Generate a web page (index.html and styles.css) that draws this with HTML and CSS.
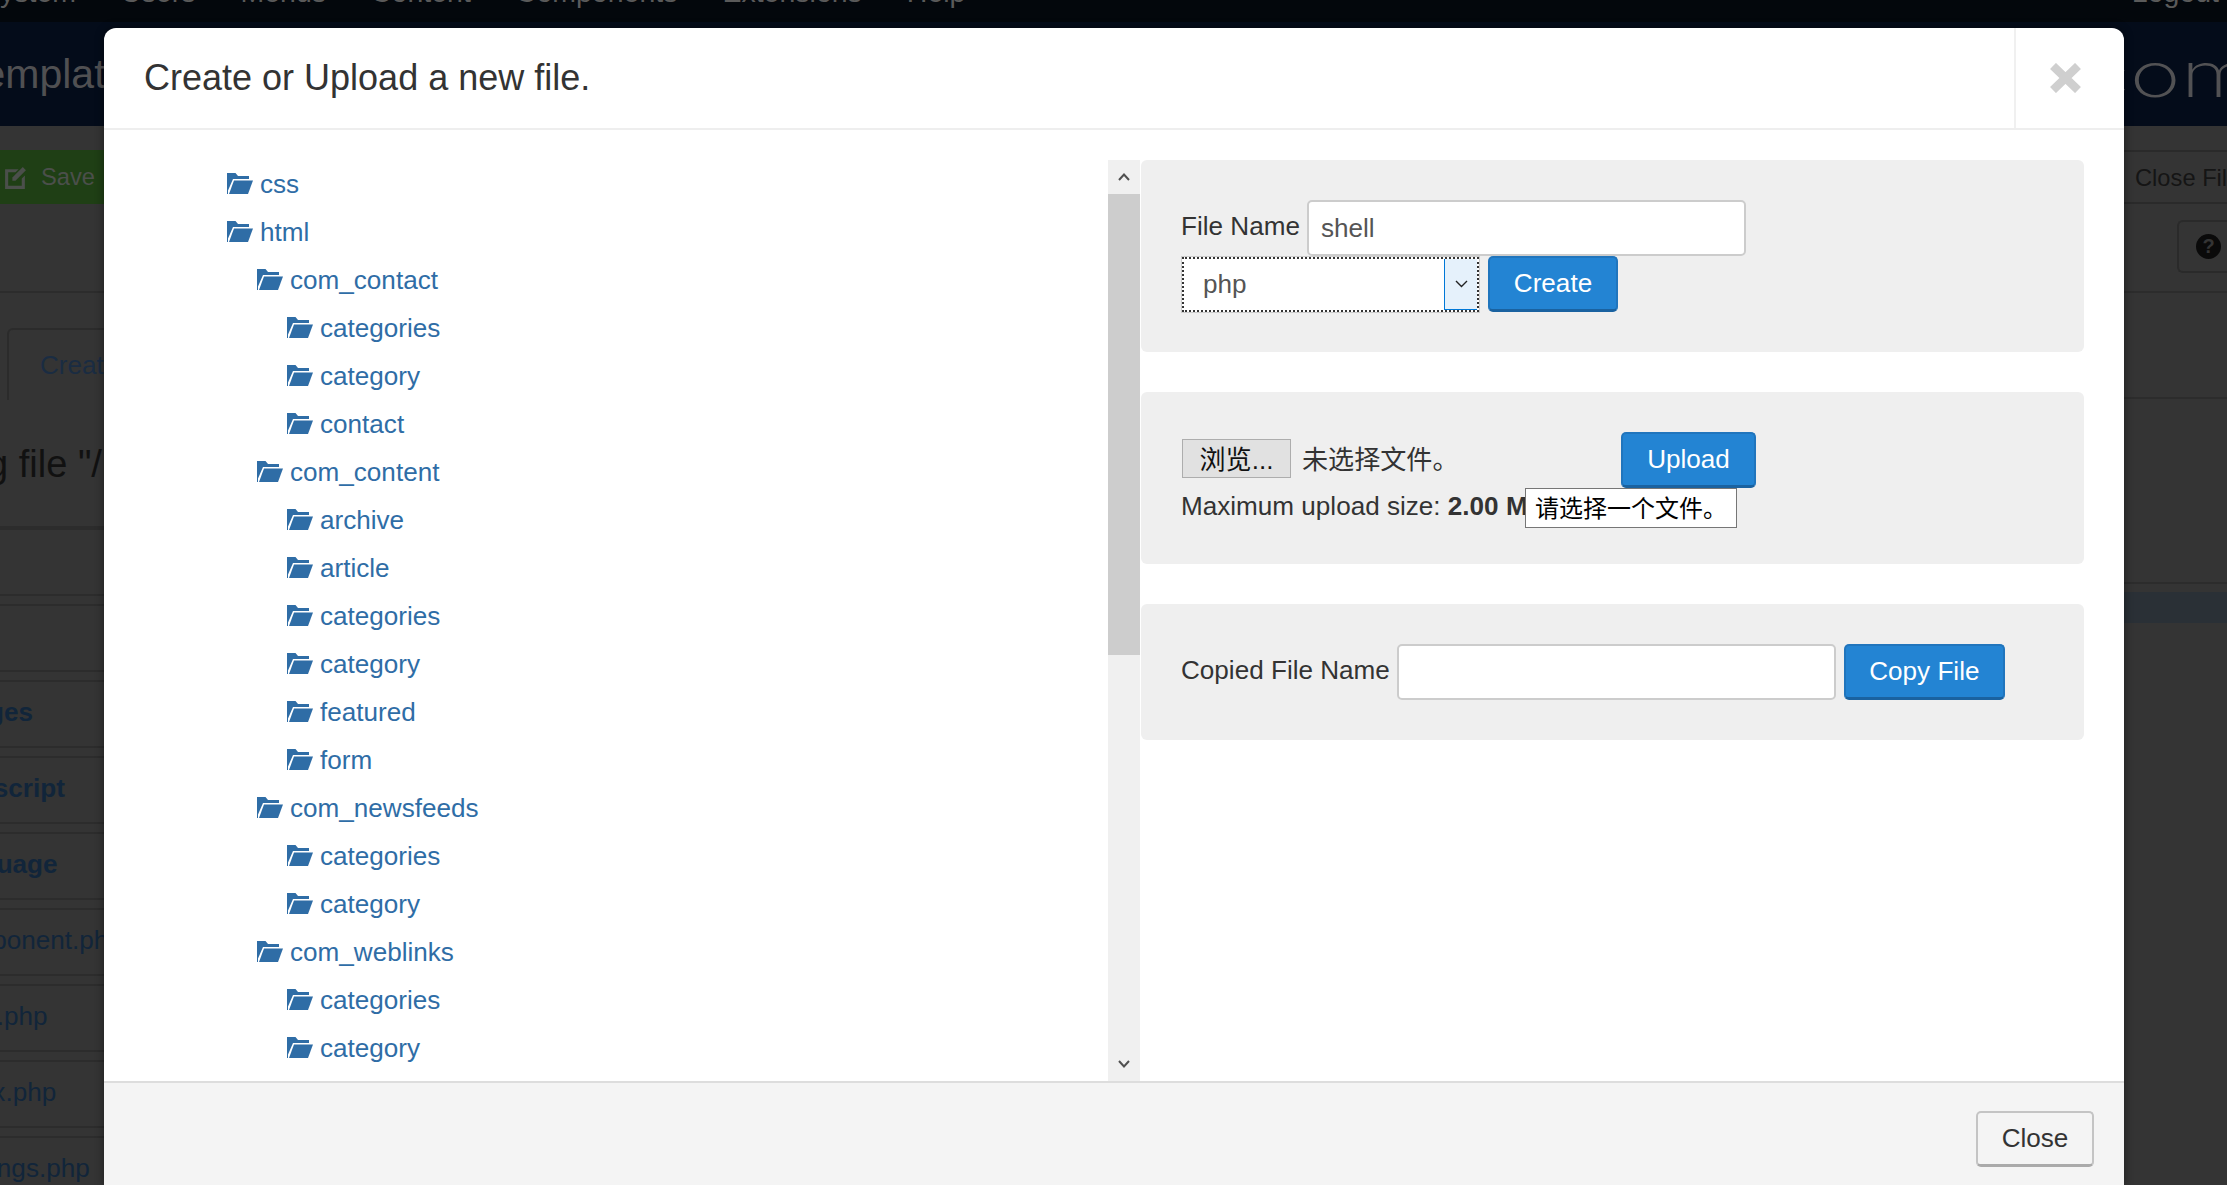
FILE: index.html
```html
<!DOCTYPE html>
<html lang="en">
<head>
    <meta charset="UTF-8">
    <title>Template Customise</title>
    <link rel="stylesheet" href="styles.css">
</head>
<body>
    <svg class="defs" width="0" height="0">
        <symbol id="folder" viewBox="0 0 26 21">
            <path d="M0 21V0h8.5L11 3h11v3H6L1 17.5V21z"/>
            <path d="M7 7.5h19L21 21H2z"/>
        </symbol>
    </svg>

    <!-- page behind the dialog -->
    <div class="page">
        <div class="nav">
            <div class="navInner">
                <span class="navFirst">System</span>
                <span>Users</span>
                <span>Menus</span>
                <span>Content</span>
                <span>Components</span>
                <span>Extensions</span>
                <span>Help</span>
                <span class="navUser">Logout</span>
            </div>
        </div>
        <div class="head">
            <span class="headTitle">Templates</span>
            <span class="headLogo">com</span>
        </div>
        <div class="toolbar">
            <div class="toolRow">
                <div class="saveBtn">
                    <svg class="editIco" viewBox="0 0 24 24"><path d="M2 4h13l-3 3H5v13h13v-7l3-3v13H2z"/><path d="M9 12L19 2l3 3-10 10H9z"/></svg>
                    <span>Save</span>
                </div>
                <div class="closeFile">Close File</div>
            </div>
            <div class="helpRow">
                <div class="helpBtn"><span class="helpDot">?</span></div>
            </div>
        </div>
        <div class="main">
            <div class="leftCol">
                <div class="tab">Create</div>
                <div class="editing">Editing file "/index.php"</div>
                <div class="fileRow"></div>
                <div class="fileRow"></div>
                <div class="fileRow bold">images</div>
                <div class="fileRow bold">javascript</div>
                <div class="fileRow bold">language</div>
                <div class="fileRow">component.php</div>
                <div class="fileRow">error.php</div>
                <div class="fileRow">index.php</div>
                <div class="fileRow lastFile">settings.php</div>
            </div>
            <div class="rightCol">
                <div class="sideLine first"></div>
                <div class="sideLine second"></div>
                <div class="sideBand"></div>
            </div>
        </div>
    </div>

    <!-- dialog -->
    <div class="modal">
        <div class="modalHead">
            <h3>Create or Upload a new file.</h3>
            <div class="modalClose">
                <svg width="31" height="30" viewBox="0 0 31 30"><path d="M3 3l25 24M28 3L3 27"/></svg>
            </div>
        </div>
        <div class="modalBody">
            <div class="treeCol">
                <ul class="tree">
                    <li><svg class="ico"><use href="#folder"/></svg>css</li>
                    <li><svg class="ico"><use href="#folder"/></svg>html
                        <ul>
                            <li><svg class="ico"><use href="#folder"/></svg>com_contact
                                <ul>
                                    <li><svg class="ico"><use href="#folder"/></svg>categories</li>
                                    <li><svg class="ico"><use href="#folder"/></svg>category</li>
                                    <li><svg class="ico"><use href="#folder"/></svg>contact</li>
                                </ul>
                            </li>
                            <li><svg class="ico"><use href="#folder"/></svg>com_content
                                <ul>
                                    <li><svg class="ico"><use href="#folder"/></svg>archive</li>
                                    <li><svg class="ico"><use href="#folder"/></svg>article</li>
                                    <li><svg class="ico"><use href="#folder"/></svg>categories</li>
                                    <li><svg class="ico"><use href="#folder"/></svg>category</li>
                                    <li><svg class="ico"><use href="#folder"/></svg>featured</li>
                                    <li><svg class="ico"><use href="#folder"/></svg>form</li>
                                </ul>
                            </li>
                            <li><svg class="ico"><use href="#folder"/></svg>com_newsfeeds
                                <ul>
                                    <li><svg class="ico"><use href="#folder"/></svg>categories</li>
                                    <li><svg class="ico"><use href="#folder"/></svg>category</li>
                                </ul>
                            </li>
                            <li><svg class="ico"><use href="#folder"/></svg>com_weblinks
                                <ul>
                                    <li><svg class="ico"><use href="#folder"/></svg>categories</li>
                                    <li><svg class="ico"><use href="#folder"/></svg>category</li>
                                </ul>
                            </li>
                        </ul>
                    </li>
                </ul>
            </div>
            <div class="scrollbar">
                <div class="scrollArrow">
                    <svg width="12" height="8" viewBox="0 0 12 8"><path d="M1 7l5-5.5L11 7"/></svg>
                </div>
                <div class="scrollThumb"></div>
                <div class="scrollTrack"></div>
                <div class="scrollArrow">
                    <svg width="12" height="8" viewBox="0 0 12 8"><path d="M1 1l5 5.5L11 1"/></svg>
                </div>
            </div>
            <div class="forms">
                <div class="well wellCreate">
                    <div class="line tight">
                        <label>File Name</label>
                        <input class="textInput" type="text" value="shell">
                    </div>
                    <div class="line">
                        <div class="fakeSelect">
                            <span class="selectText">php</span>
                            <span class="selectArrow">
                                <svg width="13" height="8" viewBox="0 0 13 8"><path d="M1 1l5.5 5.5L12 1"/></svg>
                            </span>
                        </div>
                        <button class="btnBlue">Create</button>
                    </div>
                </div>
                <div class="well wellUpload">
                    <div class="line">
                        <button class="browseBtn">浏览...</button>
                        <span class="noFile">未选择文件。</span>
                        <button class="btnBlue uploadBtn">Upload</button>
                    </div>
                    <div class="maxSize">Maximum upload size: <b>2.00 MB</b></div>
                    <div class="tip">请选择一个文件。</div>
                </div>
                <div class="well wellCopy">
                    <div class="line tight">
                        <label>Copied File Name</label>
                        <input class="textInput" type="text">
                        <button class="btnBlue copyBtn">Copy File</button>
                    </div>
                </div>
            </div>
        </div>
        <div class="modalFoot">
            <button class="closeBtn">Close</button>
        </div>
    </div>
</body>
</html>
```

FILE: styles.css
```css
*{
    box-sizing: border-box;
}
html,body{
    margin: 0;
    height: 100%;
    overflow: hidden;
}
body{
    position: relative;
    background: #343434;
    font-family: "Liberation Sans", "Noto Sans CJK SC", sans-serif;
    font-size: 26.1px;
    color: #333;
}
.defs{
    position: absolute;
}

/* page behind */
.page{
    height: 1185px;
    overflow: hidden;
    display: flex;
    flex-direction: column;
}
.nav{
    height: 22px;
    background: #03070c;
    overflow: hidden;
    flex: none;
}
.navInner{
    display: flex;
    margin-top: -22px;
    font-size: 28.5px;
    line-height: 28px;
    color: #5a5a5a;
    gap: 45px;
}
.navFirst{
    margin-left: -19px;
}
.navUser{
    margin-left: auto;
    margin-right: 8px;
}
.head{
    height: 104px;
    background: #040c1a;
    display: flex;
    justify-content: space-between;
    align-items: center;
    overflow: hidden;
    flex: none;
}
.headTitle{
    margin-left: -38px;
    font-size: 41px;
    color: #505052;
}
.headLogo{
    margin-right: -29px;
    font-family: "Inter", sans-serif;
    font-weight: 200;
    font-size: 62px;
    color: #525254;
    transform: scaleX(1.4);
    transform-origin: right center;
}
.toolbar{
    height: 167px;
    border-bottom: 2px solid #2c2c2c;
    flex: none;
    font-size: 23.7px;
}
.toolRow{
    display: flex;
    justify-content: space-between;
    padding-top: 24px;
}
.saveBtn{
    width: 110px;
    height: 54px;
    background: #1f3f15;
    color: #4b4f4b;
    display: flex;
    align-items: center;
    gap: 13px;
    padding-left: 3px;
}
.editIco{
    width: 25px;
    height: 25px;
    fill: #4b4f4b;
}
.closeFile{
    width: 130px;
    height: 54px;
    line-height: 52px;
    white-space: nowrap;
    border: 2px solid #2a2a2a;
    border-right: none;
    padding-left: 16px;
    color: #151515;
    overflow: hidden;
    margin-right: -20px;
}
.helpRow{
    display: flex;
    justify-content: flex-end;
    padding-top: 16px;
}
.helpBtn{
    width: 50px;
    height: 53px;
    border: 2px solid #2a2a2a;
    border-right: none;
    border-radius: 6px 0 0 6px;
    padding: 12px 0 0 17px;
}
.helpDot{
    display: block;
    width: 25px;
    height: 25px;
    border-radius: 50%;
    background: #0a0a0a;
    color: #343434;
    font-weight: bold;
    font-size: 20px;
    line-height: 25px;
    text-align: center;
}
.main{
    flex: 1;
    display: flex;
    justify-content: space-between;
}
.leftCol{
    width: 104px;
    overflow: hidden;
    padding-top: 35px;
    white-space: nowrap;
}
.tab{
    height: 72px;
    width: 300px;
    margin-left: 7px;
    padding-left: 31px;
    border: 2px solid #2b2b2b;
    border-bottom: none;
    border-radius: 6px 6px 0 0;
    line-height: 70px;
    color: #1a2c42;
}
.editing{
    height: 128px;
    padding-top: 41px;
    font-size: 38px;
    line-height: 46px;
    margin-left: -108px;
    color: #111;
    border-bottom: 2px solid #2c2c2c;
    width: 500px;
}
.fileRow{
    height: 68px;
    margin-bottom: 8px;
    border-top: 2px solid #2c2c2c;
    border-bottom: 2px solid #2c2c2c;
    line-height: 61px;
    color: #11253a;
    width: 300px;
    text-indent: -57px;
}
.fileRow:first-of-type{
    border-top: none;
}
.lastFile{
    text-indent: -51px;
}
.bold{
    font-weight: bold;
}
.rightCol{
    width: 103px;
}
.sideLine{
    height: 2px;
    background: #2c2c2c;
}
.sideLine.first{
    margin-top: 104px;
}
.sideLine.second{
    margin-top: 183px;
}
.sideBand{
    height: 31px;
    margin-top: 8px;
    background: #2a3036;
}

/* dialog */
.modal{
    position: absolute;
    top: 28px;
    left: 104px;
    width: 2020px;
    height: 1157px;
    background: #fff;
    border-radius: 12px 12px 0 0;
    box-shadow: 0 0 10px rgba(0,0,0,.45);
    display: flex;
    flex-direction: column;
}
.modalHead{
    height: 102px;
    flex: none;
    display: flex;
    justify-content: space-between;
    border-bottom: 2px solid #eee;
}
.modalHead h3{
    margin: 0;
    padding-left: 40px;
    font-size: 36px;
    font-weight: normal;
    line-height: 100px;
}
.modalClose{
    width: 110px;
    border-left: 2px solid #f0f0f0;
    display: flex;
    align-items: center;
    justify-content: center;
    padding-right: 10px;
}
.modalClose path{
    stroke: #cfcfcf;
    stroke-width: 8.5;
    fill: none;
}
.modalBody{
    flex: 1;
    min-height: 0;
    display: flex;
    padding-top: 30px;
}
.treeCol{
    width: 1004px;
    overflow: hidden;
    flex: none;
}
.tree,.tree ul{
    list-style: none;
    margin: 0;
    padding: 0 0 0 30px;
}
.tree{
    padding-left: 123px;
}
.tree li{
    line-height: 48px;
    color: #2f6da6;
    white-space: nowrap;
}
.ico{
    width: 26px;
    height: 21px;
    margin-right: 7px;
    fill: #2f6da6;
    vertical-align: -1px;
}
.scrollbar{
    width: 32px;
    flex: none;
    background: #f0f0f0;
    display: flex;
    flex-direction: column;
}
.scrollArrow{
    height: 34px;
    flex: none;
    display: flex;
    align-items: center;
    justify-content: center;
}
.scrollArrow path{
    fill: none;
    stroke: #505050;
    stroke-width: 2;
}
.scrollThumb{
    height: 461px;
    background: #cdcdcd;
}
.scrollTrack{
    flex: 1;
}
.forms{
    width: 943px;
    margin-left: 1px;
    display: flex;
    flex-direction: column;
    gap: 40px;
}
.well{
    background: #efefef;
    border-radius: 6px;
    padding: 40px 0 0 40px;
    position: relative;
}
.wellCreate{
    height: 192px;
}
.wellUpload{
    height: 172px;
}
.wellCopy{
    height: 136px;
}
.line{
    display: flex;
    align-items: center;
    gap: 9px;
}
.line.tight{
    gap: 7px;
}
.line label{
    margin-top: -3px;
}
.textInput{
    width: 439px;
    height: 56px;
    border: 2px solid #ccc;
    border-radius: 5px;
    padding: 0 12px;
    background: #fff;
    font: inherit;
    color: #555;
}
.fakeSelect{
    width: 297px;
    height: 55px;
    margin-left: 1px;
    background: #fff;
    border: 2px dotted #333;
    outline: 1px solid #ccc;
    display: flex;
    justify-content: space-between;
    color: #555;
}
.selectText{
    padding-left: 19px;
    line-height: 51px;
}
.selectArrow{
    width: 33px;
    background: #e5f1fb;
    border-left: 1px solid #0078d7;
    border-bottom: 1px solid #0078d7;
    display: flex;
    align-items: center;
    justify-content: center;
}
.selectArrow path{
    fill: none;
    stroke: #222;
    stroke-width: 1.4;
}
.btnBlue{
    height: 56px;
    width: 130px;
    padding: 0;
    background: #2384d3;
    border: 2px solid #2075bd;
    border-bottom: 3px solid #1a62a0;
    border-radius: 5px;
    color: #fff;
    font: inherit;
}
.browseBtn{
    width: 109px;
    height: 39px;
    padding: 3px 0 0;
    background: #e1e1e1;
    border: 1px solid #adadad;
    color: #111;
    font: inherit;
    line-height: 34px;
    margin-top: -3px;
    margin-left: 1px;
}
.noFile{
    margin-left: 2px;
    margin-top: -4px;
    width: 311px;
    white-space: nowrap;
}
.uploadBtn{
    width: 135px;
    margin-left: -1px;
}
.copyBtn{
    width: 161px;
    margin-left: 1px;
}
.maxSize{
    line-height: 36px;
}
.tip{
    position: absolute;
    left: 384px;
    top: 96px;
    width: 212px;
    height: 40px;
    padding-left: 9px;
    background: #fff;
    border: 1px solid #767676;
    color: #000;
    font-size: 24px;
    line-height: 40px;
    white-space: nowrap;
}
.modalFoot{
    height: 104px;
    flex: none;
    background: #f4f4f4;
    border-top: 2px solid #ddd;
    display: flex;
    justify-content: flex-end;
    padding: 28px 30px 0 0;
}
.closeBtn{
    width: 118px;
    height: 56px;
    padding: 0;
    background: #f4f4f4;
    border: 2px solid #c4c4c4;
    border-bottom: 3px solid #aaa;
    border-radius: 5px;
    color: #333;
    font: inherit;
}
```
